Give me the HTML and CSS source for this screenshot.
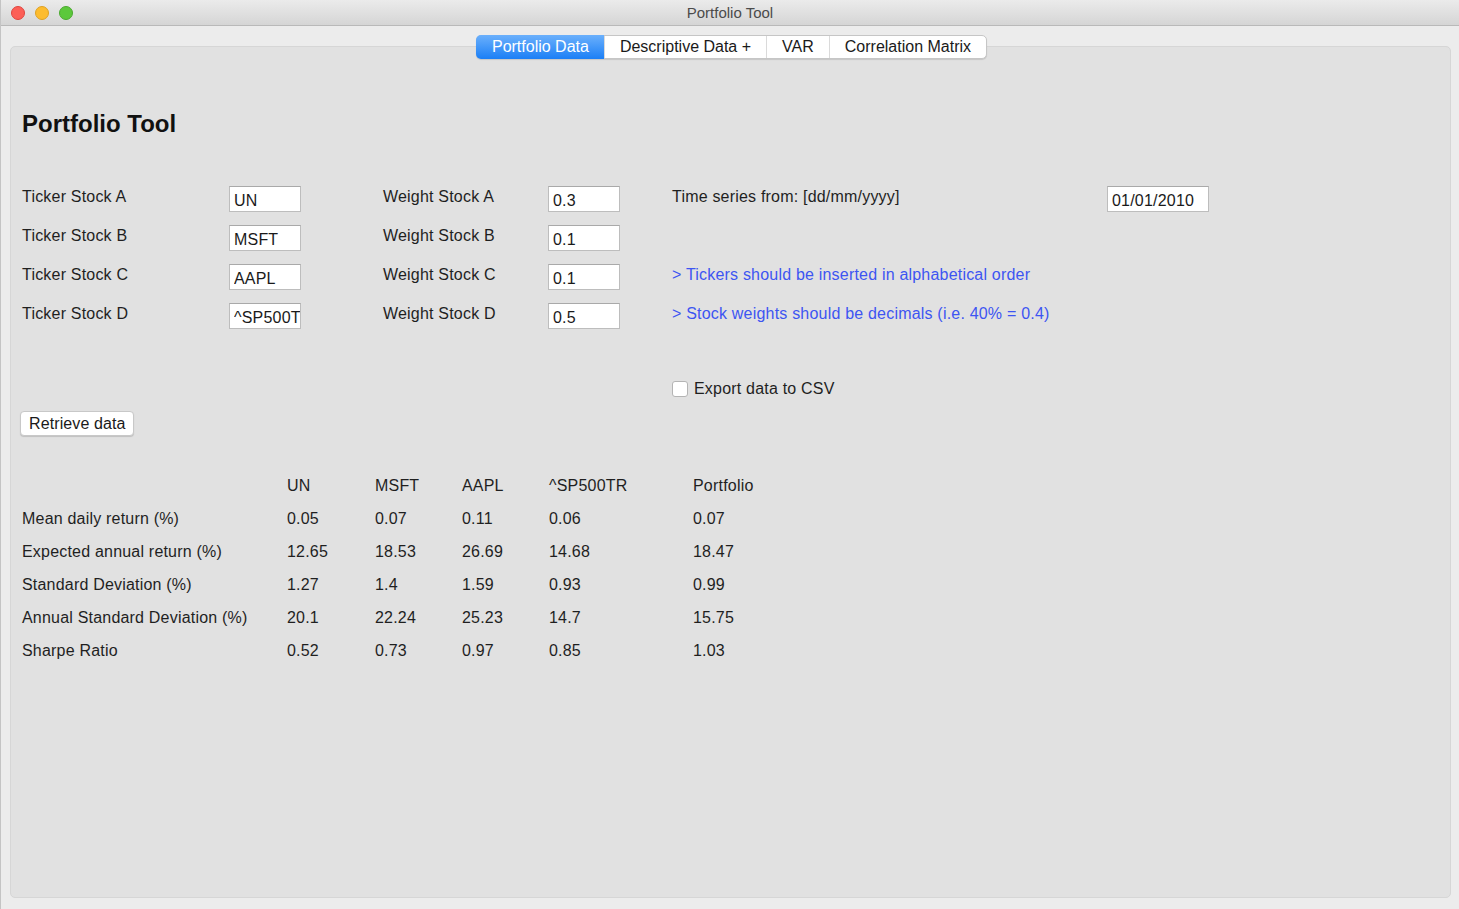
FILE: index.html
```html
<!DOCTYPE html>
<html>
<head>
<meta charset="utf-8">
<title>Portfolio Tool</title>
<link rel="stylesheet" href="styles.css">
</head>
<body>
<div class="window">
  <div class="titlebar">
    <div class="lights">
      <span class="light red"></span>
      <span class="light yellow"></span>
      <span class="light green"></span>
    </div>
    <div class="wtitle">Portfolio Tool</div>
  </div>
  <div class="wbody">
    <div class="tabs">
      <div class="tab active">Portfolio Data</div>
      <div class="tab">Descriptive Data +</div>
      <div class="tab">VAR</div>
      <div class="tab">Correlation Matrix</div>
    </div>
    <div class="panel">
      <h1 class="title">Portfolio Tool</h1>
      <div class="form">
        <div class="lbl">Ticker Stock A</div>
        <input class="field" value="UN" readonly>
        <div class="lbl">Weight Stock A</div>
        <input class="field" value="0.3" readonly>
        <div class="lbl">Time series from: [dd/mm/yyyy]</div>
        <input class="field date" value="01/01/2010" readonly>

        <div class="lbl">Ticker Stock B</div>
        <input class="field" value="MSFT" readonly>
        <div class="lbl">Weight Stock B</div>
        <input class="field" value="0.1" readonly>
        <div class="lbl span2"></div>

        <div class="lbl">Ticker Stock C</div>
        <input class="field" value="AAPL" readonly>
        <div class="lbl">Weight Stock C</div>
        <input class="field" value="0.1" readonly>
        <div class="lbl note span2">&gt; Tickers should be inserted in alphabetical order</div>

        <div class="lbl">Ticker Stock D</div>
        <input class="field" value="^SP500TR" readonly>
        <div class="lbl">Weight Stock D</div>
        <input class="field" value="0.5" readonly>
        <div class="lbl note span2">&gt; Stock weights should be decimals (i.e. 40% = 0.4)</div>

        <label class="export">
          <span class="check"></span>
          <span>Export data to CSV</span>
        </label>
      </div>
      <button class="btn">Retrieve data</button>
      <div class="stats">
        <div></div><div>UN</div><div>MSFT</div><div>AAPL</div><div>^SP500TR</div><div>Portfolio</div>
        <div>Mean daily return (%)</div><div>0.05</div><div>0.07</div><div>0.11</div><div>0.06</div><div>0.07</div>
        <div>Expected annual return (%)</div><div>12.65</div><div>18.53</div><div>26.69</div><div>14.68</div><div>18.47</div>
        <div>Standard Deviation (%)</div><div>1.27</div><div>1.4</div><div>1.59</div><div>0.93</div><div>0.99</div>
        <div>Annual Standard Deviation (%)</div><div>20.1</div><div>22.24</div><div>25.23</div><div>14.7</div><div>15.75</div>
        <div>Sharpe Ratio</div><div>0.52</div><div>0.73</div><div>0.97</div><div>0.85</div><div>1.03</div>
      </div>
    </div>
  </div>
</div>
</body>
</html>
```

FILE: styles.css
```css
* { box-sizing: border-box; }
html, body {
  margin: 0;
  padding: 0;
  background: #ececec;
}
body {
  font-family: "Liberation Sans", Arial, sans-serif;
  font-size: 16px;
  color: #1f1f1f;
}
.window {
  width: 1459px;
  height: 909px;
  display: flex;
  flex-direction: column;
  background: #ececec;
  border-left: 1px solid #c4c4c4;
}
.titlebar {
  height: 26px;
  flex: none;
  display: flex;
  align-items: center;
  position: relative;
  background: linear-gradient(#ebebeb, #d5d5d5);
  border-bottom: 1px solid #b9b9b9;
}
.lights {
  display: flex;
  gap: 10px;
  padding-left: 10px;
}
.light {
  width: 14px;
  height: 14px;
  border-radius: 50%;
  display: block;
}
.red { background: #fc5f57; border: 1px solid #e0443e; }
.yellow { background: #fdbc2e; border: 1px solid #dea123; }
.green { background: #5cc83b; border: 1px solid #4aa92e; }
.wtitle {
  position: absolute;
  left: 0;
  right: 0;
  text-align: center;
  font-size: 15px;
  color: #4b4b4b;
  pointer-events: none;
}
.wbody {
  flex: 1;
  display: flex;
  flex-direction: column;
  padding: 9px 8px 11px 9px;
}
.tabs {
  align-self: center;
  display: flex;
  height: 24px;
  margin-bottom: -13px;
  position: relative;
  z-index: 1;
  margin-left: 2px;
  background: #fff;
  border: 1px solid #c6c6c6;
  border-radius: 5px;
  box-shadow: 0 1px 1px rgba(0,0,0,0.12);
}
.tab {
  padding: 0 15px;
  line-height: 22px;
  font-size: 16px;
  letter-spacing: 0;
  color: #1a1a1a;
  border-left: 1px solid #dadada;
}
.tab:first-child { border-left: none; }
.tab.active {
  background: linear-gradient(#6bb0fc, #1b7ff6);
  color: #fff;
  margin: -1px 0 -1px -1px;
  line-height: 24px;
  padding: 0 15px 0 16px;
  border-radius: 5px 0 0 5px;
}
.panel {
  flex: 1;
  background: #e1e1e1;
  border: 1px solid #d6d6d6;
  border-radius: 5px;
  padding: 63px 11px 0 11px;
}
.title {
  margin: 0;
  font-size: 24px;
  line-height: 28px;
  font-weight: bold;
  color: #111;
}
.form {
  margin-top: 48px;
  display: grid;
  grid-template-columns: 207px 154px 165px 124px 435px 102px;
  row-gap: 13px;
}
.lbl {
  align-self: start;
  line-height: 20px;
  padding-top: 1px;
  letter-spacing: 0.2px;
  white-space: nowrap;
}
.span2 { grid-column: span 2; }
.note { color: #3d55f2; }
.field {
  width: 72px;
  height: 26px;
  margin: 0;
  padding: 3px 0 0 4px;
  font-family: "Liberation Sans", Arial, sans-serif;
  font-size: 16px;
  letter-spacing: 0.2px;
  color: #1a1a1a;
  background: #fff;
  border: 1px solid #bdbdbd;
  border-top-color: #a9a9a9;
  border-radius: 0;
  outline: none;
}
.field.date {
  width: 102px;
  padding-left: 4px;
}
.export {
  grid-column: 5 / span 2;
  display: flex;
  align-items: center;
  gap: 6px;
  margin-top: 39px;
  height: 16px;
  letter-spacing: 0.2px;
}
.check {
  width: 16px;
  height: 16px;
  background: #fff;
  border: 1px solid #b4b4b4;
  border-radius: 3px;
  display: block;
}
.btn {
  display: block;
  margin: 14px 0 0 -2px;
  height: 25px;
  padding: 0 8px;
  font-family: "Liberation Sans", Arial, sans-serif;
  font-size: 16px;
  letter-spacing: 0.1px;
  color: #1a1a1a;
  background: #fff;
  border: 1px solid #c8c8c8;
  border-radius: 4px;
  box-shadow: 0 1px 1px rgba(0,0,0,0.15);
}
.stats {
  margin-top: 33px;
  display: grid;
  grid-template-columns: 265px 88px 87px 87px 144px 120px;
  line-height: 33px;
  letter-spacing: 0.2px;
  white-space: nowrap;
}
```
